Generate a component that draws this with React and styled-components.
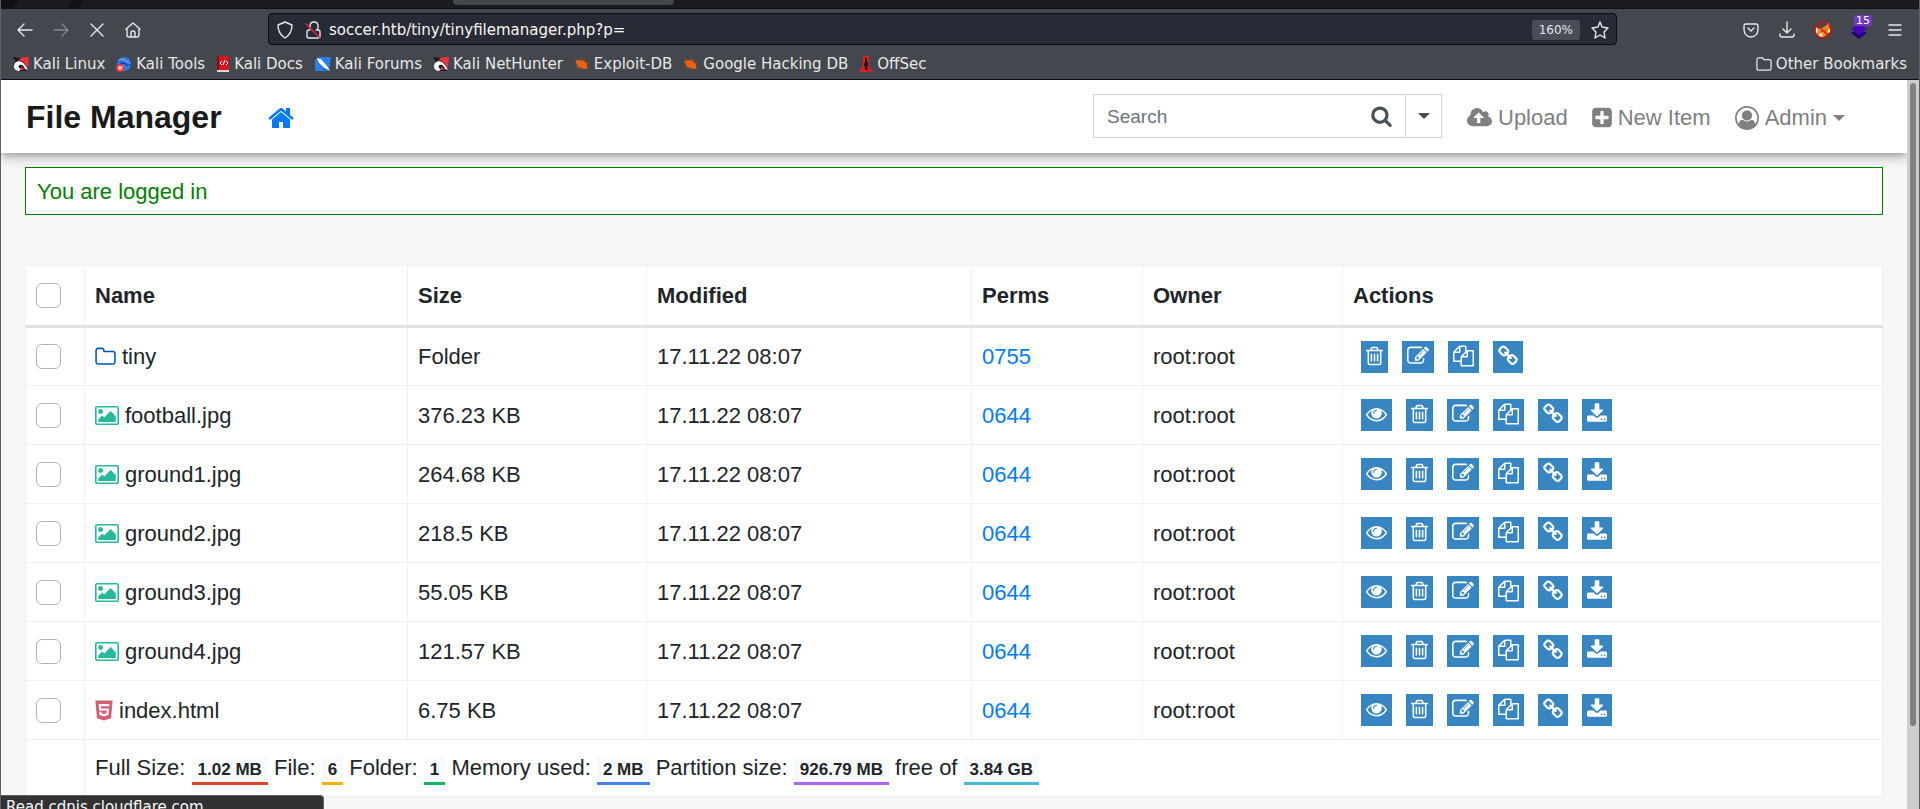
import React, { useState } from "react";
import styled, { createGlobalStyle } from "styled-components";
import { FaHtml5 } from "react-icons/fa";

const GlobalStyle = createGlobalStyle`
  * {
    box-sizing: border-box;
  }

  body {
    margin: 0;
    overflow: hidden;
    color: #212529;
    background: #f7f7f7;
    font-family: "Liberation Sans", Arial, sans-serif;
    font-size: 22px;
    line-height: 33px;
  }

  button,
  input {
    font: inherit;
    color: inherit;
  }

  a {
    color: #007bff;
    text-decoration: none;
  }
`;

// [min-x, advance width, path] on a 1792 unit em square
const glyphs = {
  trash: [192, 1408, "M704 736v576q0 14-9 23t-23 9h-64q-14 0-23-9t-9-23v-576q0-14 9-23t23-9h64q14 0 23 9t9 23zm256 0v576q0 14-9 23t-23 9h-64q-14 0-23-9t-9-23v-576q0-14 9-23t23-9h64q14 0 23 9t9 23zm256 0v576q0 14-9 23t-23 9h-64q-14 0-23-9t-9-23v-576q0-14 9-23t23-9h64q14 0 23 9t9 23zm128 724v-948h-896v948q0 22 7 40.5t14.5 27 10.5 8.5h832q3 0 10.5-8.5t14.5-27 7-40.5zm-672-1076h448l-48-117q-7-9-17-11h-317q-10 2-17 11zm928 32v64q0 14-9 23t-23 9h-96v948q0 83-47 143.5t-113 60.5h-832q-66 0-113-58.5t-47-141.5v-952h-96q-14 0-23-9t-9-23v-64q0-14 9-23t23-9h309l70-167q15-37 54-63t79-26h320q40 0 79 26t54 63l70 167h309q14 0 23 9t9 23z"],
  edit: [0, 1792, "M888 1184l116-116-152-152-116 116v56h96v96h56zm440-720q-16-16-33 1l-350 350q-17 17-1 33t33-1l350-350q17-17 1-33zm80 594v190q0 119-84.5 203.5t-203.5 84.5h-832q-119 0-203.5-84.5t-84.5-203.5v-832q0-119 84.5-203.5t203.5-84.5h832q63 0 117 25 15 7 18 23 3 17-9 29l-49 49q-14 14-32 8-23-6-45-6h-832q-66 0-113 47t-47 113v832q0 66 47 113t113 47h832q66 0 113-47t47-113v-126q0-13 9-22l64-64q15-15 35-7t20 29zm-96-738l288 288-672 672h-288v-288zm444 132l-92 92-288-288 92-92q28-28 68-28t68 28l152 152q28 28 28 68t-28 68z"],
  files: [0, 1792, "M1696 384q40 0 68 28t28 68v1216q0 40-28 68t-68 28h-960q-40 0-68-28t-28-68v-288h-544q-40 0-68-28t-28-68v-672q0-40 20-88t48-76l408-408q28-28 76-48t88-20h416q40 0 68 28t28 68v328q68-40 128-40h416zm-544 213l-299 299h299v-299zm-640-384l-299 299h299v-299zm196 647l316-316v-416h-384v416q0 40-28 68t-68 28h-416v640h512v-256q0-40 20-88t48-76zm956 804v-1152h-384v416q0 40-28 68t-68 28h-416v640h896z"],
  link: [64, 1664, "M1520 1216q0-40-28-68l-208-208q-28-28-68-28-42 0-72 32 3 3 19 18.5t21.5 21.5 15 19 13 25.5 3.5 27.5q0 40-28 68t-68 28q-15 0-27.5-3.5t-25.5-13-19-15-21.5-21.5-18.5-19q-33 31-33 73 0 40 28 68l206 207q27 27 68 27 40 0 68-26l147-146q28-28 28-67zm-703-705q0-40-28-68l-206-207q-28-28-68-28-39 0-68 27l-147 146q-28 28-28 67 0 40 28 68l208 208q27 27 68 27 42 0 72-31-3-3-19-18.5t-21.5-21.5-15-19-13-25.5-3.5-27.5q0-40 28-68t68-28q15 0 27.5 3.5t25.5 13 19 15 21.5 21.5 18.5 19q33-31 33-73zm895 705q0 120-85 203l-147 146q-83 83-203 83-121 0-204-85l-206-207q-83-83-83-203 0-123 88-209l-88-88q-86 88-208 88-120 0-204-84l-208-208q-84-84-84-204t85-203l147-146q83-83 203-83 121 0 204 85l206 207q83 83 83 203 0 123-88 209l88 88q86-88 208-88 120 0 204 84l208 208q84 84 84 204z"],
  eye: [0, 1792, "M1664 960q-152-236-381-353 61 104 61 225 0 185-131.5 316.5t-316.5 131.5-316.5-131.5-131.5-316.5q0-121 61-225-229 117-381 353 133 205 333.5 326.5t434.5 121.5 434.5-121.5 333.5-326.5zm-720-384q0-20-14-34t-34-14q-125 0-214.5 89.5t-89.5 214.5q0 20 14 34t34 14 34-14 14-34q0-86 61-147t147-61q20 0 34-14t14-34zm848 384q0 34-20 69-140 230-376.5 368.5t-499.5 138.5-499.5-139-376.5-368q-20-35-20-69t20-69q140-229 376.5-368t499.5-139 499.5 139 376.5 368q20 35 20 69z"],
  download: [64, 1664, "M1344 1344q0-26-19-45t-45-19-45 19-19 45 19 45 45 19 45-19 19-45zm256 0q0-26-19-45t-45-19-45 19-19 45 19 45 45 19 45-19 19-45zm128-224v320q0 40-28 68t-68 28h-1472q-40 0-68-28t-28-68v-320q0-40 28-68t68-28h465l135 136q58 56 136 56t136-56l136-136h464q40 0 68 28t28 68zm-325-569q17 41-14 70l-448 448q-18 19-45 19t-45-19l-448-448q-31-29-14-70 17-39 59-39h256v-448q0-26 19-45t45-19h256q26 0 45 19t19 45v448h256q42 0 59 39z"],
  home: [64, 1664, "M1472 992v480q0 26-19 45t-45 19h-384v-384h-256v384h-384q-26 0-45-19t-19-45v-480q0-1 .5-3t.5-3l575-474 575 474q1 2 1 6zm223-69l-62 74q-8 9-21 11h-3q-13 0-21-7l-692-577-692 577q-12 8-24 7-13-2-21-11l-62-74q-8-10-7-23.5t11-21.5l719-599q32-26 76-26t76 26l244 204v-195q0-14 9-23t23-9h192q14 0 23 9t9 23v408l219 182q10 8 11 21.5t-7 23.5z"],
  search: [64, 1664, "M1216 832q0-185-131.5-316.5t-316.5-131.5-316.5 131.5-131.5 316.5 131.5 316.5 316.5 131.5 316.5-131.5 131.5-316.5zm512 832q0 52-38 90t-90 38q-54 0-90-38l-343-342q-179 124-399 124-143 0-273.5-55.5t-225-150-150-225-55.5-273.5 55.5-273.5 150-225 225-150 273.5-55.5 273.5 55.5 225 150 150 225 55.5 273.5q0 220-124 399l343 343q37 37 37 90z"],
  upload: [-64, 1920, "M1216 864q0-14-9-23l-352-352q-9-9-23-9t-23 9l-351 351q-10 12-10 24 0 14 9 23t23 9h224v352q0 13 9.5 22.5t22.5 9.5h192q13 0 22.5-9.5t9.5-22.5v-352h224q13 0 22.5-9.5t9.5-22.5zm640 288q0 159-112.5 271.5t-271.5 112.5h-1088q-185 0-316.5-131.5t-131.5-316.5q0-130 70-240t188-165q-2-30-2-43 0-212 150-362t362-150q156 0 285.5 87t188.5 231q71-62 166-62 106 0 181 75t75 181q0 76-41 138 130 31 213.5 135.5t83.5 238.5z"],
  plus: [128, 1536, "M1408 960v-128q0-26-19-45t-45-19h-320v-320q0-26-19-45t-45-19h-128q-26 0-45 19t-19 45v320h-320q-26 0-45 19t-19 45v128q0 26 19 45t45 19h320v320q0 26 19 45t45 19h128q26 0 45-19t19-45v-320h320q26 0 45-19t19-45zm256-544v960q0 119-84.5 203.5t-203.5 84.5h-960q-119 0-203.5-84.5t-84.5-203.5v-960q0-119 84.5-203.5t203.5-84.5h960q119 0 203.5 84.5t84.5 203.5z"],
  user: [0, 1792, "M896 0q182 0 348 71t286 191 191 286 71 348q0 181-70.5 347t-190.5 286-286 191.5-349 71.5-349-71-285.5-191.5-190.5-286-71-347.5 71-348 191-286 286-191 348-71zm619 1351q149-205 149-455 0-156-61-298t-164-245-245-164-298-61-298 61-245 164-164 245-61 298q0 250 149 455 66-327 306-327 131 128 313 128t313-128q240 0 306 327zm-235-647q0-159-112.5-271.5t-271.5-112.5-271.5 112.5-112.5 271.5 112.5 271.5 271.5 112.5 271.5-112.5 112.5-271.5z"],
  folder: [64, 1664, "M1600 1312v-704q0-40-28-68t-68-28h-704q-40 0-68-28t-28-68v-64q0-40-28-68t-68-28h-320q-40 0-68 28t-28 68v960q0 40 28 68t68 28h1216q40 0 68-28t28-68zm128-704v704q0 92-66 158t-158 66h-1216q-92 0-158-66t-66-158v-960q0-92 66-158t158-66h320q92 0 158 66t66 158v32h672q92 0 158 66t66 158z"],
  image: [-64, 1920, "M576 576q0 80-56 136t-136 56-136-56-56-136 56-136 136-56 136 56 56 136zm1024 384v448h-1408v-192l320-320 160 160 512-512zm96-704h-1600q-13 0-22.5 9.5t-9.5 22.5v1216q0 13 9.5 22.5t22.5 9.5h1600q13 0 22.5-9.5t9.5-22.5v-1216q0-13-9.5-22.5t-22.5-9.5zm160 32v1216q0 66-47 113t-113 47h-1600q-66 0-113-47t-47-113v-1216q0-66 47-113t113-47h1600q66 0 113 47t47 113z"]
};

function Glyph({ name, width, height }) {
  const [x, w, d] = glyphs[name];
  return (
    <svg
      width={width}
      height={height}
      viewBox={`${x} 0 ${w} 1792`}
      fill="currentColor"
      aria-hidden="true"
    >
      <path d={d} />
    </svg>
  );
}

/* ---------- browser window ---------- */

const Window = styled.div`
  height: 100vh;
  display: flex;
  flex-direction: column;
  overflow: hidden;
  border: solid #5f6063;
  border-width: 0 1px;
`;

const TabStrip = styled.div`
  flex: none;
  height: 9px;
  padding-left: 452px;
  border-bottom: 1px solid #0f1014;
  background: linear-gradient(
    125deg,
    #101115 14px,
    #1a1b1f 15px,
    #1a1b1f 58px,
    #101115 59px,
    #101115 67px,
    #1a1b1f 68px
  );
`;

const ActiveTab = styled.div`
  width: 221px;
  height: 5px;
  border-radius: 0 0 4px 4px;
  background: #44474d;
`;

const Chrome = styled.div`
  flex: none;
  padding-top: 4px;
  border-bottom: 1px solid #0c0d12;
  color: #e6e7e9;
  background: #44474d;
  font-family: "DejaVu Sans", Verdana, sans-serif;
  font-size: 15px;
  line-height: 20px;
`;

const NavRow = styled.div`
  display: flex;
  align-items: center;
`;

const NavGroup = styled.div`
  flex: none;
  display: flex;
  gap: 12px;
  width: ${props => (props.$end ? "302px" : "267px")};
  padding: ${props => (props.$end ? "2px 12px 0 0" : "2px 0 0 12px")};
  justify-content: ${props => (props.$end ? "flex-end" : "flex-start")};
`;

const ToolButton = styled.button`
  position: relative;
  flex: none;
  display: flex;
  align-items: center;
  justify-content: center;
  width: 24px;
  height: 24px;
  padding: 0;
  border: 0;
  background: none;
  opacity: ${props => (props.disabled ? 0.4 : 1)};
`;

const CountBadge = styled.span`
  position: absolute;
  top: -3px;
  right: -1px;
  padding: 0 2px;
  border-radius: 2px;
  color: #fff;
  background: #7139bd;
  font-size: 11px;
  line-height: 11px;
`;

const AddressBar = styled.div`
  flex: 1;
  min-width: 0;
  display: flex;
  align-items: center;
  gap: 4px;
  height: 32px;
  padding: 1px 4px 0;
  border: 1px solid #0c0d12;
  border-radius: 4px;
  background: #282a36;
`;

const AddressInput = styled.input`
  flex: 1;
  min-width: 0;
  padding: 0;
  border: 0;
  outline: 0;
  color: #f8f8f2;
  background: none;
`;

const ZoomButton = styled.button`
  height: 20px;
  margin-right: 4px;
  padding: 0 7px;
  border: 0;
  border-radius: 3px;
  background: #4a4c57;
  font-size: 12px;
`;

const Bookmarks = styled.nav`
  display: flex;
  align-items: center;
  gap: 11px;
  height: 34px;
  padding: 4px 12px 0;
`;

const Bookmark = styled.a`
  display: flex;
  align-items: center;
  gap: 4px;
  color: inherit;
  white-space: nowrap;

  &:last-child {
    margin-left: auto;
  }
`;

const Viewport = styled.div`
  flex: 1;
  min-height: 0;
  display: flex;
`;

const Page = styled.div`
  flex: 1;
  min-width: 0;
  overflow: hidden;
`;

const ScrollTrack = styled.div`
  flex: none;
  width: 12px;
  padding: 3px;
  background: #cdcdcd;
`;

const ScrollThumb = styled.div`
  width: 6px;
  height: 89%;
  border-radius: 3px;
  background: #7e8282;
`;

const StatusPanel = styled.div`
  position: fixed;
  left: 0;
  bottom: 0;
  width: 324px;
  height: 14px;
  padding: 0 5px;
  overflow: hidden;
  border: solid #5f6063;
  border-width: 1px 1px 0;
  border-radius: 0 4px 0 0;
  color: #f9f9fa;
  background: #323234;
  font-family: "DejaVu Sans", Verdana, sans-serif;
  font-size: 15px;
  line-height: 22px;
`;

/* ---------- file manager ---------- */

const Navbar = styled.header`
  position: relative;
  display: flex;
  align-items: center;
  height: 73px;
  padding: 2px 62px 0 25px;
  background: #fff;
  box-shadow: 0 6px 8px 0 rgba(0, 0, 0, 0.14), 0 2px 16px 0 rgba(0, 0, 0, 0.12),
    0 3px 6px -2px rgba(0, 0, 0, 0.2);
`;

const Brand = styled.a`
  color: #1a1a1a;
  font-size: 32px;
  font-weight: bold;
`;

const HomeLink = styled.a`
  display: flex;
  margin-left: 46px;
`;

const SearchGroup = styled.form`
  display: flex;
  width: 349px;
  height: 44px;
  margin: 0 0 3px auto;
  border: 1px solid #ced4da;
  color: #495057;
`;

const SearchInput = styled.input`
  flex: 1;
  min-width: 0;
  padding: 0 13px;
  border: 0;
  outline: 0;
  font-size: 19px;

  &::placeholder {
    color: #6c757d;
    opacity: 1;
  }
`;

const SearchButton = styled.button`
  display: flex;
  align-items: center;
  justify-content: center;
  width: ${props => (props.$menu ? "36px" : "48px")};
  padding: 0;
  border: 0;
  border-left: ${props => (props.$menu ? "1px solid #ced4da" : "0")};
  background: none;
`;

const Caret = styled.span`
  border: 6px solid transparent;
  border-top-color: currentColor;
  border-bottom: 0;
`;

const NavLinks = styled.nav`
  display: flex;
  gap: 24px;
  margin-left: 25px;
`;

const NavLink = styled.a`
  display: flex;
  align-items: center;
  gap: 6px;
  color: #808080;
`;

const Main = styled.main`
  padding: 14px 24px;
`;

const Message = styled.p`
  margin: 0 0 50px;
  padding: 7px 11px 6px;
  border: 1px solid #008000;
  color: #008000;
  background: #fff;
`;

const Table = styled.table`
  width: 100%;
  table-layout: fixed;
  border-collapse: collapse;
  background: #fff;

  th,
  td {
    height: 59px;
    padding: 0 10px;
    border: 1px solid #eff0f1;
    text-align: left;
  }

  thead th {
    height: 61px;
    border-bottom: 3px solid #dee2e6;
  }

  tfoot td {
    height: 57px;
  }
`;

const Check = styled.input`
  appearance: none;
  display: block;
  width: 25px;
  height: 25px;
  margin: 0;
  border: 1px solid #adb5bd;
  border-radius: 6px;
  background: #fff;

  &:checked {
    border-color: #007bff;
    background: #007bff;
  }
`;

const FileLink = styled.a`
  display: flex;
  align-items: center;
  gap: 6px;
  color: inherit;

  svg {
    color: ${props => props.$tint};
  }
`;

const HtmlIcon = styled(FaHtml5)`
  width: 18px;
  height: 23px;
`;

const Actions = styled.div`
  display: flex;
  gap: 14px;
  padding-left: 8px;
`;

const ActionLink = styled.a`
  display: flex;
  padding: 4px 5px 6px;
  color: #fff;
  background: #3785c1;
`;

const Badge = styled.span`
  display: inline-block;
  padding: 4px 6px;
  border-bottom: 3px solid ${props => props.$line};
  background: #f8f9fa;
  font-size: 17px;
  font-weight: bold;
  line-height: 17px;
`;

const actionSizes = { eye: 21, trash: 17, edit: 22, files: 21, link: 20, download: 20 };
const actionTitles = {
  eye: "Preview",
  trash: "Delete",
  edit: "Rename",
  files: "Copy to",
  link: "Direct link",
  download: "Download"
};
const folderActions = ["trash", "edit", "files", "link"];
const fileActions = ["eye", "trash", "edit", "files", "link", "download"];

const files = [
  { name: "tiny", size: "Folder", perms: "0755", type: "folder" },
  { name: "football.jpg", size: "376.23 KB", perms: "0644", type: "image" },
  { name: "ground1.jpg", size: "264.68 KB", perms: "0644", type: "image" },
  { name: "ground2.jpg", size: "218.5 KB", perms: "0644", type: "image" },
  { name: "ground3.jpg", size: "55.05 KB", perms: "0644", type: "image" },
  { name: "ground4.jpg", size: "121.57 KB", perms: "0644", type: "image" },
  { name: "index.html", size: "6.75 KB", perms: "0644", type: "html" }
];

const tints = { folder: "#0157b3", image: "#26b99a", html: "#d75e72" };

function FileIcon({ type }) {
  if (type === "html") return <HtmlIcon aria-hidden="true" />;
  return <Glyph name={type} width={type === "folder" ? 21 : 24} height={type === "folder" ? 22 : 23} />;
}

function Line({ children, size = 18 }) {
  return (
    <svg
      width={size}
      height={size}
      viewBox="0 0 18 18"
      fill="none"
      stroke="currentColor"
      strokeWidth="1.4"
      strokeLinecap="round"
      strokeLinejoin="round"
      aria-hidden="true"
    >
      {children}
    </svg>
  );
}

function KaliIcon() {
  return (
    <svg width="16" height="16" viewBox="0 0 16 16" aria-hidden="true">
      <path d="M3 2l13-1-1 10-4 3z" fill="#f0323a" />
      <path d="M0 1l8 1-5 4z" fill="#17181c" />
      <path d="M2 12C0 6 5 3 9 5c3 2 4 6 6 9l-3 1-9 0z" fill="#17181c" />
      <path d="M1 11c0-5 4-7 8-5 3 2 4 5 6 8l-3-1c-1-3-3-5-5-4-2 0-2 3 1 4l-2 2c-3 0-5-2-5-4z" fill="#fff" />
      <path d="M8 10l4 4H8z" fill="#e8253c" />
    </svg>
  );
}

function ToolsIcon() {
  return (
    <svg width="16" height="16" viewBox="0 0 16 16" aria-hidden="true">
      <circle cx="8" cy="8" r="7" fill="#2b7df5" />
      <path d="M3 5c3-2 6-1 7 1 2 0 3 1 4 4M4 8c3-2 5-1 8 2" fill="none" stroke="#173a80" strokeWidth="1.2" />
      <path d="M3 4c4-1 6 0 8 2 1 0 2 1 3 2" fill="none" stroke="#b9d4fb" />
      <circle cx="4" cy="12" r="4" fill="#ee3038" />
      <path d="M2 11h5M3 11v3M5 11v3" fill="none" stroke="#fff" />
    </svg>
  );
}

function DocsIcon() {
  return (
    <svg width="14" height="16" viewBox="0 0 14 16" aria-hidden="true">
      <path d="M1 0h12v15H1z" fill="#d5141d" />
      <path d="M1 0h2v14H1z" fill="#7d0d13" />
      <path d="M1 14h12v2H1z" fill="#d9d9dc" />
      <path d="M6 5L4 7l2 2M10 5l2 2-2 2M9 4L7 9" fill="none" stroke="#fff" />
    </svg>
  );
}

function ForumsIcon() {
  return (
    <svg width="17" height="16" viewBox="0 0 17 16" aria-hidden="true">
      <path d="M1 1h16l-2 14H1z" fill="#2583f0" />
      <path d="M0 1l5 1 11 13-6-2z" fill="#17181c" />
      <path d="M2 2l5 1 6 7 3 5-6-3-5-5z" fill="#fff" />
    </svg>
  );
}

function BugIcon() {
  return (
    <svg width="16" height="16" viewBox="0 0 16 16" aria-hidden="true">
      <path d="M1 2l3 3M0 6l4 1M1 11l5-1M3 13l4-2M7 1l2 4M11 3v4M11 8l4-2M11 11l3 2" stroke="#8f5334" />
      <path d="M2 5c3-2 6-1 9 1 2 2 3 4 2 7-4 0-8-1-10-4-1-1-1-3-1-4z" fill="#ee5f0d" />
    </svg>
  );
}

function OffSecIcon() {
  return (
    <svg width="14" height="16" viewBox="0 0 14 16" aria-hidden="true">
      <path d="M4 0h6v10l4 6H0l4-6z" fill="#e02020" />
      <path d="M6 2h2v3l1 2v3l-1 1 1 3H6V11L5 9l1-3z" fill="#220b0d" />
    </svg>
  );
}

function FoxIcon() {
  return (
    <svg width="18" height="18" viewBox="0 0 18 18" aria-hidden="true">
      <path d="M2 8l5-1 3-1 5-4 1 7-2 4-6 4-5-3z" fill="#ee8b16" />
      <path d="M1 5l3 3-1 5-2-2zM5 13l4-1-1 4-3-1zM14 9l3-1-1 3-2 1zM13 3l2-1 1 3z" fill="#f4e9dc" />
      <path d="M7 10l1 1M11 9l1 1" stroke="#3d1f05" />
      <circle cx="9" cy="9" r="8" fill="none" stroke="#cf1010" strokeWidth="1.4" />
      <path d="M3 4l12 11" stroke="#cf1010" strokeWidth="1.4" />
    </svg>
  );
}

function LayersIcon() {
  return (
    <svg width="18" height="20" viewBox="0 0 18 20" aria-hidden="true">
      <path d="M1 13l4-2 4 3 4-3 4 2-8 6z" fill="#20007a" />
      <path d="M1 9l8-5 8 5-8 6z" fill="#4a06b8" />
    </svg>
  );
}

const bookmarks = [
  ["Kali Linux", KaliIcon],
  ["Kali Tools", ToolsIcon],
  ["Kali Docs", DocsIcon],
  ["Kali Forums", ForumsIcon],
  ["Kali NetHunter", KaliIcon],
  ["Exploit-DB", BugIcon],
  ["Google Hacking DB", BugIcon],
  ["OffSec", OffSecIcon]
];

function Browser() {
  return (
    <Chrome>
      <NavRow>
        <NavGroup>
          <ToolButton aria-label="Back">
            <Line><path d="M16 9H2M8 3L2 9l6 6" /></Line>
          </ToolButton>
          <ToolButton aria-label="Forward" disabled>
            <Line><path d="M2 9h14M10 3l6 6-6 6" /></Line>
          </ToolButton>
          <ToolButton aria-label="Stop">
            <Line><path d="M3 3l12 12M15 3L3 15" /></Line>
          </ToolButton>
          <ToolButton aria-label="Home">
            <Line><path d="M2 8l7-6 7 6M3 8v6q0 2 2 2h8q2 0 2-2V8M7 16v-4q0-2 2-2t2 2v4" /></Line>
          </ToolButton>
        </NavGroup>
        <AddressBar>
          <ToolButton aria-label="Tracking protection">
            <Line><path d="M9 1l7 3c0 6-2 10-7 13C4 14 2 10 2 4z" /></Line>
          </ToolButton>
          <ToolButton aria-label="Connection is not secure">
            <Line>
              <path d="M6 7V5q0-4 4-4t4 4v3M6 9H5q-2 0-2 2v4q0 2 2 2h9q2 0 2-2v-4q0-2-2-2h-2" />
              <path d="M2 3l14 14" stroke="#e22850" />
            </Line>
          </ToolButton>
          <AddressInput aria-label="Address" defaultValue="soccer.htb/tiny/tinyfilemanager.php?p=" />
          <ZoomButton>160%</ZoomButton>
          <ToolButton aria-label="Bookmark this page">
            <Line><path d="M9 1l2 5 6 1-4 4 1 6-5-3-5 3 1-6-4-4 6-1z" /></Line>
          </ToolButton>
        </AddressBar>
        <NavGroup $end>
          <ToolButton aria-label="Save to Pocket">
            <Line><path d="M4 3h10q2 0 2 2v3c0 5-3 8-7 8S2 13 2 8V5q0-2 2-2zM6 7l3 3 3-3" /></Line>
          </ToolButton>
          <ToolButton aria-label="Downloads">
            <Line><path d="M9 1v11M5 8l4 4 4-4M2 13v1q0 2 2 2h10q2 0 2-2v-1" /></Line>
          </ToolButton>
          <ToolButton aria-label="FoxyProxy"><FoxIcon /></ToolButton>
          <ToolButton aria-label="Wappalyzer">
            <LayersIcon />
            <CountBadge>15</CountBadge>
          </ToolButton>
          <ToolButton aria-label="Menu">
            <Line><path d="M3 4h12M3 9h12M3 14h12" /></Line>
          </ToolButton>
        </NavGroup>
      </NavRow>
      <Bookmarks>
        {bookmarks.map(([label, Icon]) => (
          <Bookmark href="#" key={label}>
            <Icon />
            {label}
          </Bookmark>
        ))}
        <Bookmark href="#">
          <Line size={16}><path d="M1 4q0-2 2-2h4l2 2h6q2 0 2 2v8q0 2-2 2H3q-2 0-2-2z" /></Line>
          Other Bookmarks
        </Bookmark>
      </Bookmarks>
    </Chrome>
  );
}

function FileTable() {
  const [checked, setChecked] = useState([]);
  const allChecked = checked.length === files.length;

  const toggle = name =>
    setChecked(checked.includes(name) ? checked.filter(n => n !== name) : [...checked, name]);

  return (
    <Table>
      <colgroup>
        <col width="59" />
        <col width="323" />
        <col width="239" />
        <col width="325" />
        <col width="171" />
        <col width="200" />
        <col />
      </colgroup>
      <thead>
        <tr>
          <th>
            <Check
              type="checkbox"
              aria-label="Select all"
              checked={allChecked}
              onChange={() => setChecked(allChecked ? [] : files.map(f => f.name))}
            />
          </th>
          <th>Name</th>
          <th>Size</th>
          <th>Modified</th>
          <th>Perms</th>
          <th>Owner</th>
          <th>Actions</th>
        </tr>
      </thead>
      <tbody>
        {files.map(file => (
          <tr key={file.name}>
            <td>
              <Check
                type="checkbox"
                aria-label={file.name}
                checked={checked.includes(file.name)}
                onChange={() => toggle(file.name)}
              />
            </td>
            <td>
              <FileLink href="#" $tint={tints[file.type]}>
                <FileIcon type={file.type} />
                {file.name}
              </FileLink>
            </td>
            <td>{file.size}</td>
            <td>17.11.22 08:07</td>
            <td><a href="#">{file.perms}</a></td>
            <td>root:root</td>
            <td>
              <Actions>
                {(file.type === "folder" ? folderActions : fileActions).map(action => (
                  <ActionLink href="#" key={action} aria-label={actionTitles[action]}>
                    <Glyph name={action} width={actionSizes[action]} height={22} />
                  </ActionLink>
                ))}
              </Actions>
            </td>
          </tr>
        ))}
      </tbody>
      <tfoot>
        <tr>
          <td />
          <td colSpan="6">
            Full Size: <Badge $line="#e1412b">1.02 MB</Badge> File: <Badge $line="#f8b300">6</Badge>{" "}
            Folder: <Badge $line="#0cb85f">1</Badge> Memory used: <Badge $line="#4680fe">2 MB</Badge>{" "}
            Partition size: <Badge $line="#ab67fb">926.79 MB</Badge> free of{" "}
            <Badge $line="#46bdd0">3.84 GB</Badge>
          </td>
        </tr>
      </tfoot>
    </Table>
  );
}

function App() {
  return (
    <Window>
      <GlobalStyle />
      <TabStrip>
        <ActiveTab />
      </TabStrip>
      <Browser />
      <Viewport>
        <Page>
          <Navbar>
            <Brand href="#">File Manager</Brand>
            <HomeLink href="#" aria-label="Home">
              <Glyph name="home" width={26} height={28} />
            </HomeLink>
            <SearchGroup onSubmit={e => e.preventDefault()}>
              <SearchInput type="text" placeholder="Search" aria-label="Search" />
              <SearchButton aria-label="Search files">
                <Glyph name="search" width={21} height={22} />
              </SearchButton>
              <SearchButton type="button" aria-label="Search options" $menu>
                <Caret />
              </SearchButton>
            </SearchGroup>
            <NavLinks>
              <NavLink href="#">
                <Glyph name="upload" width={25} height={24} />
                Upload
              </NavLink>
              <NavLink href="#">
                <Glyph name="plus" width={20} height={23} />
                New Item
              </NavLink>
              <NavLink href="#">
                <Glyph name="user" width={24} height={24} />
                Admin
                <Caret />
              </NavLink>
            </NavLinks>
          </Navbar>
          <Main>
            <Message>You are logged in</Message>
            <FileTable />
          </Main>
        </Page>
        <ScrollTrack>
          <ScrollThumb />
        </ScrollTrack>
      </Viewport>
      <StatusPanel>Read cdnjs.cloudflare.com</StatusPanel>
    </Window>
  );
}

export default App;
